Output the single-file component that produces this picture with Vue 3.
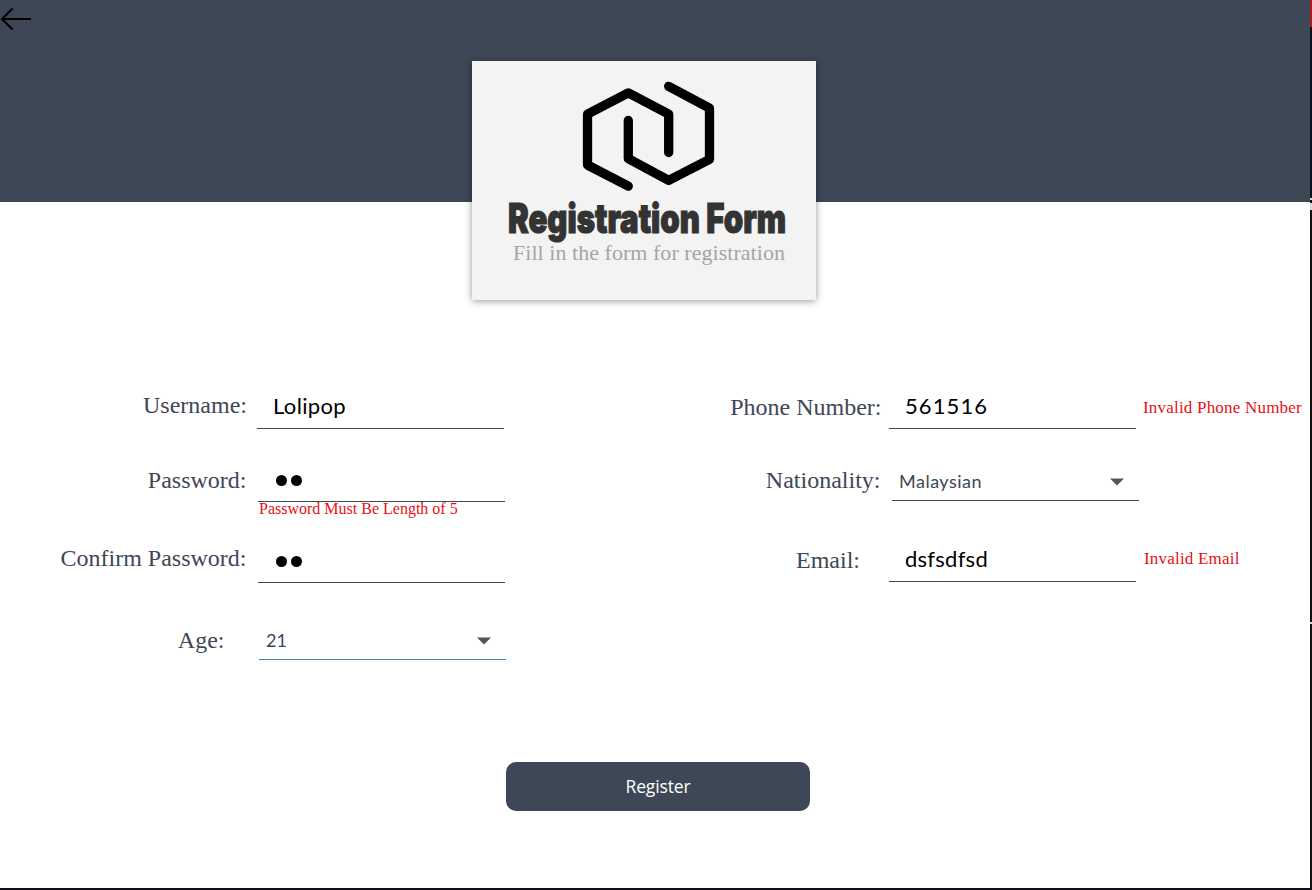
<script setup>
const accountFields = [
  { id: 'username', label: 'Username:', value: 'Lolipop', type: 'text' },
  { id: 'password', label: 'Password:', value: '', type: 'secret', error: 'Password Must Be Length of 5' },
  { id: 'confirm', label: 'Confirm Password:', value: '', type: 'secret' },
  { id: 'age', label: 'Age:', value: '21', type: 'select' },
]
const contactFields = [
  { id: 'phone', label: 'Phone Number:', value: '561516', type: 'text', error: 'Invalid Phone Number' },
  { id: 'nationality', label: 'Nationality:', value: 'Malaysian', type: 'select' },
  { id: 'email', label: 'Email:', value: 'dsfsdfsd', type: 'text', error: 'Invalid Email' },
]
const columns = [
  { id: 'account', fields: accountFields },
  { id: 'contact', fields: contactFields },
]
</script>

<template>
  <div class="window">
    <main class="page">
      <header class="banner">
        <svg class="back" width="34" height="24" viewBox="0 0 34 24">
          <path d="M12.500 1.500 2 12l10.500 10.500M2 12h29" fill="none" stroke="#000" stroke-width="2.200" />
        </svg>
        <section class="card">
          <svg class="logo" width="140" height="116" viewBox="0 0 140 116">
            <g fill="none" stroke="#000" stroke-width="9.300" stroke-linecap="round" stroke-linejoin="round">
              <path d="M50.300 107.200 9.500 86V35.200L50.300 13.900 90.700 35.200V73.500" />
              <path d="M90.700 7.300 131.500 29.200V80.300L90.700 101.300 50.300 79.700V41.500" />
            </g>
          </svg>
          <svg class="title" width="280" height="44" viewBox="0 0 280 44">
            <text x="0" y="34.500" textLength="278" lengthAdjust="spacingAndGlyphs">Registration Form</text>
          </svg>
          <p class="subtitle">Fill in the form for registration</p>
        </section>
      </header>

      <form class="form" @submit.prevent>
        <div class="columns">
          <div v-for="col in columns" :key="col.id" :class="['column', col.id]">
            <div v-for="f in col.fields" :key="f.id" :class="['row', f.id]">
              <label class="label">{{ f.label }}</label>
              <div :class="['field', f.type]">
                <template v-if="f.type === 'secret'">
                  <i class="dot"></i><i class="dot"></i>
                </template>
                <span v-else class="value">{{ f.value }}</span>
                <svg v-if="f.type === 'select'" class="arrow" width="14" height="8" viewBox="0 0 14 8">
                  <path d="M0 .5h14L7 7.500z" fill="#555" />
                </svg>
              </div>
              <span v-if="f.error" class="error">{{ f.error }}</span>
            </div>
          </div>
        </div>
        <button class="submit" type="submit">Register</button>
      </form>
    </main>
  </div>
</template>

<style>
body { margin: 0; overflow: hidden; }
</style>

<style scoped>
.window {
  box-sizing: border-box;
  width: 1312px;
  height: 890px;
  padding: 0 2px 2px 0;
  background: linear-gradient(#a71e25 0 27px, #0b1015 27px 198px, #d8dbdd 198px 200px, #0b1015 200px 203px, #d8dbdd 203px 210px, #0b1015 210px 622px, #d8dbdd 622px 624px, #101117 624px);
}
.page { height: 888px; background: #fff; }
.banner {
  display: flex;
  align-items: flex-start;
  height: 202px;
  background: #3e4756;
}
.back { display: block; margin-top: 7px; }
.card {
  display: flex;
  flex-direction: column;
  box-sizing: border-box;
  width: 344px;
  height: 239px;
  margin: 61px 0 0 438px;
  padding-top: 18px;
  background: #f3f3f3;
  box-shadow: 0 1px 7px rgba(0, 0, 0, .42);
}
.logo { display: block; margin-left: 106px; }
.title { display: block; margin: 3px 0 0 36px; overflow: visible; }
.title text {
  font: 900 41px "Inter", "Liberation Sans", sans-serif;
  fill: #333;
  stroke: #333;
  stroke-width: 1.2px;
}
.subtitle {
  margin: -2px 0 0 41px;
  font: 22px/26px "Liberation Serif", serif;
  letter-spacing: .04px;
  color: #a5a5a5;
  white-space: nowrap;
}
.form { padding-top: 178px; }
.columns { display: flex; height: 382px; }
.column { flex: none; }
.account { width: 700px; }
.row { display: flex; align-items: flex-end; white-space: nowrap; }
.username { height: 49px; }
.password { height: 73px; position: relative; }
.confirm { height: 81px; }
.age { height: 77px; }
.phone { height: 49px; }
.nationality { height: 72px; }
.email { height: 81px; }
.label {
  box-sizing: border-box;
  flex: none;
  text-align: right;
  font: 24px/28px "Liberation Serif", serif;
  color: #3e4756;
}
.username .label { width: 257px; padding-right: 10px; margin-bottom: 10px; }
.password .label { width: 258px; padding-right: 11.5px; margin-bottom: 8px; }
.confirm .label { width: 258px; padding-right: 11.5px; margin-bottom: 11px; }
.age .label { width: 259px; padding-right: 34.5px; margin-bottom: 6px; }
.phone .label { width: 189px; padding-right: 7.5px; margin-bottom: 8px; }
.nationality .label { width: 192px; padding-right: 11.5px; margin-bottom: 7px; }
.email .label { width: 189px; padding-right: 29px; margin-bottom: 8px; }
.field {
  display: flex;
  align-items: center;
  box-sizing: border-box;
  flex: none;
  width: 247px;
  height: 43px;
  padding: 0 0 3px 16px;
  border-bottom: 1px solid #474747;
  font: 22px/38px "Lato", sans-serif;
  color: #000;
}
.username .value { letter-spacing: .35px; }
.phone .value { letter-spacing: 1.1px; }
.email .value { letter-spacing: .25px; }
.field.secret { padding: 0 0 0 18px; gap: 4px; }
.field.select {
  padding: 4px 15px 0 7px;
  justify-content: space-between;
  font-size: 18px;
  line-height: 38px;
  color: #3e4756;
}
.nationality .value { letter-spacing: .5px; }
.row.age .field.select { border-bottom: 1px solid #4589b5; }
.dot { width: 11px; height: 11px; border-radius: 50%; background: #000; }
.arrow { flex: none; margin-top: 1px; }
.error {
  font: 17px/20px "Liberation Serif", serif;
  color: #e60f14;
}
.password .error { position: absolute; left: 259px; top: 70px; font-size: 16px; }
.phone .error { margin: 0 0 11px 7px; letter-spacing: .2px; }
.email .error { margin: 0 0 13px 8px; letter-spacing: .2px; }
.submit {
  display: block;
  width: 304px;
  height: 49px;
  margin-left: 506px;
  padding: 0;
  border: 0;
  border-radius: 10px;
  background: #3e4756;
  color: #fff;
  font: 17.5px/49px "Open Sans", "Noto Sans", sans-serif;
  letter-spacing: -.15px;
}
</style>
